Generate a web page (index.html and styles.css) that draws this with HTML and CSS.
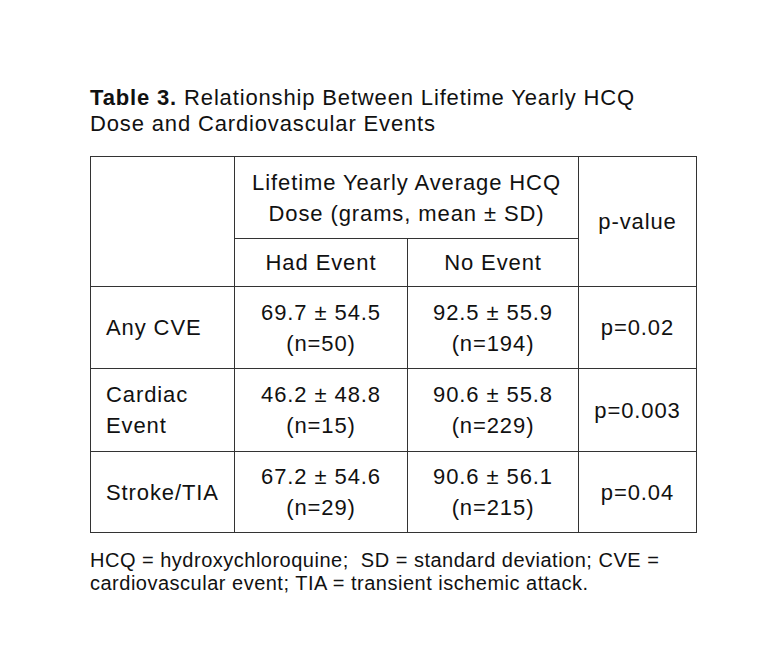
FILE: index.html
```html
<!DOCTYPE html>
<html>
<head>
<meta charset="utf-8">
<link rel="stylesheet" href="styles.css">
</head>
<body>
<div class="page">
  <p class="caption"><b>Table 3.</b> Relationship Between Lifetime Yearly HCQ<br>Dose and Cardiovascular Events</p>
  <table class="data">
    <colgroup>
      <col class="c1"><col class="c2"><col class="c3"><col class="c4">
    </colgroup>
    <tr class="r-head">
      <td rowspan="2"></td>
      <td colspan="2">Lifetime Yearly Average HCQ<br>Dose (grams, mean ± SD)</td>
      <td rowspan="2">p-value</td>
    </tr>
    <tr class="r-sub">
      <td>Had Event</td>
      <td>No Event</td>
    </tr>
    <tr class="r-body">
      <td class="label">Any CVE</td>
      <td>69.7 ± 54.5<br>(n=50)</td>
      <td>92.5 ± 55.9<br>(n=194)</td>
      <td>p=0.02</td>
    </tr>
    <tr class="r-body2">
      <td class="label">Cardiac<br>Event</td>
      <td>46.2 ± 48.8<br>(n=15)</td>
      <td>90.6 ± 55.8<br>(n=229)</td>
      <td>p=0.003</td>
    </tr>
    <tr class="r-body3">
      <td class="label">Stroke/TIA</td>
      <td>67.2 ± 54.6<br>(n=29)</td>
      <td>90.6 ± 56.1<br>(n=215)</td>
      <td>p=0.04</td>
    </tr>
  </table>
  <p class="note">HCQ = hydroxychloroquine;&nbsp; SD = standard deviation; CVE =<br>cardiovascular event; TIA = transient ischemic attack.</p>
</div>
</body>
</html>
```
FILE: styles.css
```css
html, body {
  margin: 0;
  padding: 0;
  background: #fff;
}
.page {
  padding: 85px 0 0 90px;
  font-family: "Liberation Sans", Arial, sans-serif;
  color: #111;
}
.caption {
  margin: 0;
  font-size: 22px;
  line-height: 26px;
  letter-spacing: 0.85px;
}
.caption b {
  font-weight: bold;
}
.data {
  margin-top: 19px;
  border-collapse: collapse;
  font-size: 22px;
  line-height: 31px;
  letter-spacing: 0.9px;
  table-layout: fixed;
  width: 606px;
}
.c1 { width: 144px; }
.c2 { width: 173px; }
.c3 { width: 171px; }
.c4 { width: 118px; }
.data td {
  border: 1px solid #333;
  padding: 0;
  text-align: center;
  vertical-align: middle;
}
.data td.label {
  text-align: left;
  padding-left: 15px;
}
.r-head { height: 82px; }
.r-sub { height: 48px; }
.r-body { height: 82px; }
.r-body2 { height: 83px; }
.r-body3 { height: 81px; }
.note {
  margin: 16px 0 0 0;
  font-size: 20px;
  line-height: 23px;
  letter-spacing: 0.5px;
}
```
